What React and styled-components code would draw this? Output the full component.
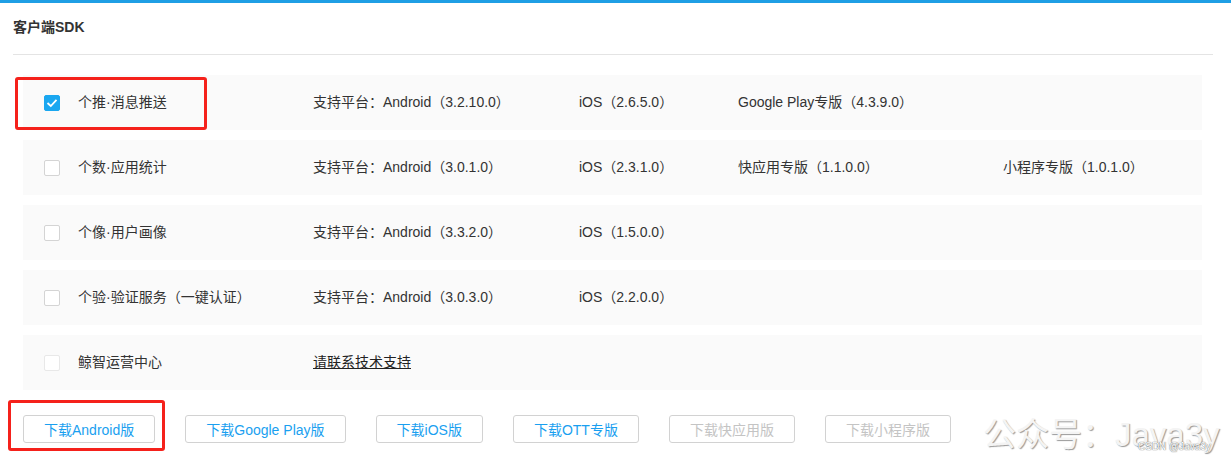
import React from 'react';
import styled, { createGlobalStyle } from "styled-components";

const GlobalStyle = createGlobalStyle`
	body {
		margin: 0;
		background: #fff;
		font-family: "Liberation Sans", "Noto Sans CJK SC", Arial, sans-serif;
		color: #333;
	}
`

const sdkList = [
	{ name: '个推·消息推送', checked: true, versions: ['支持平台：Android（3.2.10.0）', 'iOS（2.6.5.0）', 'Google Play专版（4.3.9.0）'] },
	{ name: '个数·应用统计', versions: ['支持平台：Android（3.0.1.0）', 'iOS（2.3.1.0）', '快应用专版（1.1.0.0）', '小程序专版（1.0.1.0）'] },
	{ name: '个像·用户画像', versions: ['支持平台：Android（3.3.2.0）', 'iOS（1.5.0.0）'] },
	{ name: '个验·验证服务（一键认证）', versions: ['支持平台：Android（3.0.3.0）', 'iOS（2.2.0.0）'] },
	{ name: '鲸智运营中心', disabled: true, link: '请联系技术支持' },
]

const buttons = [
	{ text: '下载Android版' },
	{ text: '下载Google Play版' },
	{ text: '下载iOS版' },
	{ text: '下载OTT专版' },
	{ text: '下载快应用版', disabled: true },
	{ text: '下载小程序版', disabled: true },
]

export default function App(){

	return (
		<Page>
			<GlobalStyle />
			<Title>客户端SDK</Title>
			<List>
				{sdkList.map((sdk) => (
					<Row key={sdk.name}>
						<NameCell>
							<Check $checked={sdk.checked} $disabled={sdk.disabled}>
								{sdk.checked && (
									<svg width="12" height="10" viewBox="0 0 12 10">
										<path d="M1.5 5 L4.8 8 L10.5 1.8" fill="none" stroke="#fff" strokeWidth="1.8" />
									</svg>
								)}
							</Check>
							<span>{sdk.name}</span>
						</NameCell>
						{sdk.link && <SupportLink>{sdk.link}</SupportLink>}
						{sdk.versions && sdk.versions.map((v) => <span key={v}>{v}</span>)}
					</Row>
				))}
			</List>
			<Toolbar>
				{buttons.map((b) => (
					<Button key={b.text} $disabled={b.disabled}>{b.text}</Button>
				))}
			</Toolbar>

			<Mark $left={15} $top={77} $width={192} $height={53} />
			<Mark $left={8} $top={400} $width={157} $height={51} />

			<Watermark>公众号：Java3y</Watermark>
			<Credit>CSDN @Java3y</Credit>
		</Page>
	)

}

const Page = styled.div`
	position: relative;
	height: 463px;
	border-top: 3px solid #1f9fe5;
	box-sizing: border-box;
	padding: 0 18px 0 13px;
	overflow: hidden;
`

const Title = styled.div`
	font-size: 14px;
	font-weight: bold;
	color: #333;
	height: 51px;
	line-height: 48px;
	border-bottom: 1px solid #e4e4e4;
`

const List = styled.div`
	display: flex;
	flex-direction: column;
	gap: 10px;
	padding: 20px 11px 0 10px;
`

const Row = styled.div`
	display: grid;
	grid-template-columns: 290px 266px 159px 265px 1fr;
	align-items: center;
	height: 55px;
	box-sizing: border-box;
	padding-bottom: 3px;
	background: #fafafa;
	font-size: 14px;
	color: #333;
	white-space: nowrap;
`

const NameCell = styled.div`
	display: flex;
	align-items: center;
	gap: 18px;
	padding-left: 21px;
`

const Check = styled.span`
	width: 16px;
	height: 16px;
	box-sizing: border-box;
	border-radius: 2px;
	margin-top: 3px;
	display: flex;
	align-items: center;
	justify-content: center;
	background: ${p => p.$checked ? '#1aa7f0' : '#fff'};
	border: 1px solid ${p => p.$checked ? '#1aa7f0' : p.$disabled ? '#e8e8e8' : '#d4d4d4'};
`

const SupportLink = styled.a`
	color: #222;
	text-decoration: underline;
`

const Toolbar = styled.div`
	display: flex;
	gap: 30px;
	padding: 25px 0 0 10px;
`

const Button = styled.button`
	height: 28px;
	padding: 0 20px;
	background: #fff;
	border: 1px solid #d2d2d2;
	border-radius: 3px;
	font-family: inherit;
	font-size: 14px;
	color: ${p => p.$disabled ? '#c4c4c4' : '#1a9ff0'};
	cursor: ${p => p.$disabled ? 'not-allowed' : 'pointer'};
`

const Mark = styled.div`
	position: absolute;
	left: ${p => p.$left}px;
	top: ${p => p.$top - 3}px;
	width: ${p => p.$width}px;
	height: ${p => p.$height}px;
	box-sizing: border-box;
	border: 3px solid #f5211b;
	border-radius: 3px;
	pointer-events: none;
`

const Watermark = styled.div`
	position: absolute;
	left: 983px;
	top: 405px;
	font-size: 33px;
	color: #f4f4f4;
	text-shadow: 1px 1px 1px #9a9a9a, -1px -1px 0 #fff;
	white-space: nowrap;
	pointer-events: none;
`

const Credit = styled.div`
	position: absolute;
	left: 1138px;
	top: 438px;
	font-size: 10px;
	color: #fff;
	text-shadow: 0 0 1px #777, 0 0 1px #777;
	white-space: nowrap;
	pointer-events: none;
`
